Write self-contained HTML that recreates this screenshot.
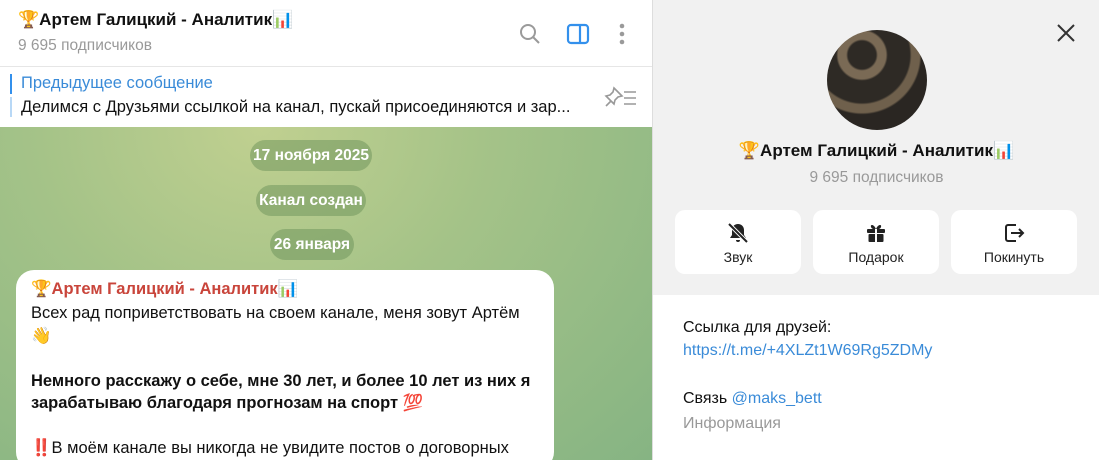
<!DOCTYPE html>
<html><head><meta charset="utf-8"><style>
*{margin:0;padding:0;box-sizing:border-box}
body{width:1099px;height:460px;overflow:hidden;font-family:"Liberation Sans","DejaVu Sans",sans-serif;position:relative;background:#fff}
.abs{position:absolute;white-space:nowrap}
#left{position:absolute;left:0;top:0;width:652px;height:460px}
#hdr{position:absolute;left:0;top:0;width:652px;height:67px;background:#fff;border-bottom:1px solid #e6e6e6}
#pin{position:absolute;left:0;top:68px;width:652px;height:59px;background:#fff}
#chat{position:absolute;left:0;top:127px;width:652px;height:333px;background:radial-gradient(ellipse at 40% 0%,#c0d090 0%,#a5c388 40%,#86b483 100%)}
.pill{position:absolute;height:31px;border-radius:16px;background:rgba(100,140,85,.45);color:#fff;font-size:15.5px;font-weight:bold;line-height:31px;text-align:center}
#bubble{position:absolute;left:16px;top:270px;width:538px;height:200px;background:#fff;border-radius:18px}
#right{position:absolute;left:652px;top:0;width:447px;height:460px;background:#f1f1f1;border-left:1px solid #ddd}
.btn{position:absolute;top:210px;width:126px;height:64px;background:#fff;border-radius:10px;text-align:center;font-size:14px;color:#222}
.btn svg{display:block;margin:11px auto 4px}
</style></head><body>
<div id="left">
<div id="hdr">
 <div class="abs" style="left:18px;top:10px;font-size:17px;font-weight:bold;color:#111">🏆Артем Галицкий - Аналитик📊</div>
 <div class="abs" style="left:18px;top:37px;font-size:15.5px;color:#999">9 695 подписчиков</div>
 <svg class="abs" style="left:518px;top:22px" width="24" height="24" viewBox="0 0 24 24" fill="none" stroke="#9a9a9a" stroke-width="2"><circle cx="10" cy="10" r="7"/><path d="M15 15l6 6"/></svg>
 <svg class="abs" style="left:566px;top:22px" width="24" height="24" viewBox="0 0 24 24" fill="none" stroke="#3390ec" stroke-width="2.2"><rect x="2" y="3" width="20" height="18" rx="3"/><path d="M14 3v18"/></svg>
 <svg class="abs" style="left:612px;top:22px" width="20" height="24" viewBox="0 0 20 24" fill="#9a9a9a"><circle cx="10" cy="4" r="2.3"/><circle cx="10" cy="12" r="2.3"/><circle cx="10" cy="20" r="2.3"/></svg>
</div>
<div id="pin">
 <div class="abs" style="left:10px;top:6px;width:2px;height:20px;background:#3390ec"></div>
 <div class="abs" style="left:10px;top:29px;width:2px;height:20px;background:#b8d8f6"></div>
 <div class="abs" style="left:21px;top:6px;font-size:16.5px;color:#3a8bd8">Предыдущее сообщение</div>
 <div class="abs" style="left:21px;top:30px;font-size:16.5px;color:#111">Делимся с Друзьями ссылкой на канал, пускай присоединяются и зар...</div>
 <svg class="abs" style="left:604px;top:18px" width="34" height="22" viewBox="0 0 34 22" fill="none" stroke="#999" stroke-width="1.6"><path d="M10 2l8 8-4 1-3 3-1 4-8-8 4-1 3-3z"/><path d="M2 20l5-5"/><path d="M20 6h12M20 12h12M20 18h12"/></svg>
</div>
<div id="chat">
 <div class="pill" style="left:250px;top:13px;width:122px">17 ноября 2025</div>
 <div class="pill" style="left:256px;top:58px;width:110px">Канал создан</div>
 <div class="pill" style="left:270px;top:102px;width:84px">26 января</div>
</div>
<div id="bubble">
 <div class="abs" style="left:15px;top:10px;font-size:16.5px;font-weight:bold;color:#c9453b">🏆Артем Галицкий - Аналитик📊</div>
 <div class="abs" style="left:15px;top:32px;font-size:16.5px;line-height:22.5px;color:#111">Всех рад поприветствовать на своем канале, меня зовут Артём<br>👋<br><br><b>Немного расскажу о себе, мне 30 лет, и более 10 лет из них я<br>зарабатываю благодаря прогнозам на спорт 💯</b><br><br>‼️В моём канале вы никогда не увидите постов о договорных</div>
</div>
</div>
<div id="right">
 <svg class="abs" style="left:404px;top:24px" width="18" height="18" viewBox="0 0 18 18" stroke="#333" stroke-width="2"><path d="M1 1l16 16M17 1L1 17"/></svg>
 <div class="abs" style="left:174px;top:30px;width:100px;height:100px;border-radius:50%;background:radial-gradient(circle at 35% 25%,#2e2a25 0 14%,#7a6a55 16% 24%,#2e2a25 26% 48%,#6f604c 50% 58%,#2a2622 60%)"></div>
 <div class="abs" style="left:0;width:447px;top:141px;text-align:center;font-size:17px;font-weight:bold;color:#111">🏆Артем Галицкий - Аналитик📊</div>
 <div class="abs" style="left:0;width:447px;top:169px;text-align:center;font-size:15.5px;color:#999">9 695 подписчиков</div>
 <div class="btn" style="left:22px"><svg width="24" height="24" viewBox="0 0 24 24"><path d="M12 3c-3.5 0-6 2.5-6 6v5l-2 3h16l-2-3V9c0-3.5-2.5-6-6-6z" fill="#222"/><path d="M10 19a2 2 0 004 0z" fill="#222"/><path d="M3 3l18 18" stroke="#fff" stroke-width="4"/><path d="M3 3l18 18" stroke="#222" stroke-width="2"/></svg>Звук</div>
 <div class="btn" style="left:160px"><svg width="24" height="24" viewBox="0 0 24 24" fill="#222"><rect x="3" y="8" width="18" height="4" rx="1"/><rect x="4.5" y="13" width="15" height="8" rx="1"/><path d="M12 8C10 3 6 3 7 6s5 2 5 2zM12 8c2-5 6-5 5-2s-5 2-5 2z"/><rect x="11" y="8" width="2" height="13" fill="#fff"/></svg>Подарок</div>
 <div class="btn" style="left:298px"><svg width="24" height="24" viewBox="0 0 24 24" fill="none" stroke="#222" stroke-width="2"><path d="M14 4H6a2 2 0 00-2 2v12a2 2 0 002 2h8M9 12h12M17 8l4 4-4 4"/></svg>Покинуть</div>
 <div class="abs" style="left:0;top:295px;width:447px;height:165px;background:#fff"></div>
 <div class="abs" style="left:30px;top:319px;font-size:16px;color:#111">Ссылка для друзей:</div>
 <div class="abs" style="left:30px;top:342px;font-size:16px;color:#3a8bd8">https://t.me/+4XLZt1W69Rg5ZDMy</div>
 <div class="abs" style="left:30px;top:390px;font-size:16px;color:#111">Связь <span style="color:#3a8bd8">@maks_bett</span></div>
 <div class="abs" style="left:30px;top:415px;font-size:16px;color:#999">Информация</div>
</div>
</body></html>
